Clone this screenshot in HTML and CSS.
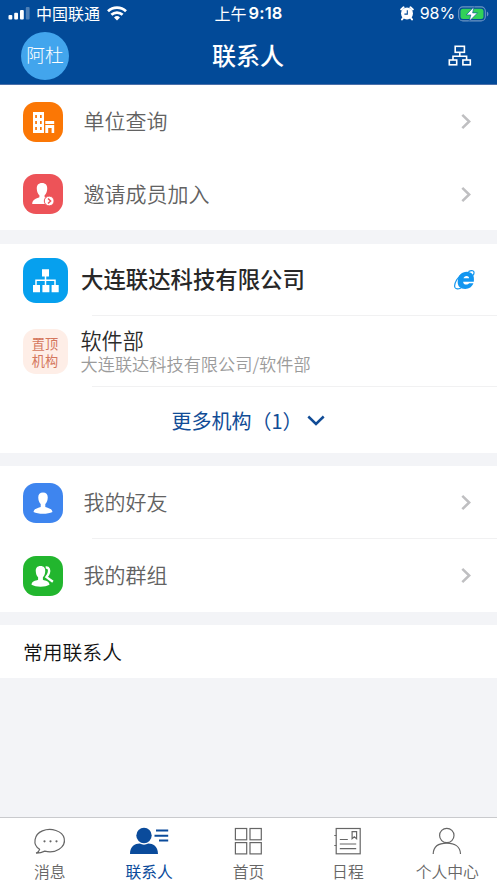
FILE: index.html
```html
<!DOCTYPE html>
<html lang="zh-CN">
<head>
<meta charset="utf-8">
<title>联系人</title>
<link rel="stylesheet" href="styles.css">
</head>
<body>
<div class="app">
  <header class="header">
    <div class="status">
      <div class="status-left">
        <svg class="signal" width="23" height="13" viewBox="0 0 23 13" fill="#fff"><rect x="0.5" y="8" width="3.8" height="4.5" rx="1"/><rect x="6.2" y="5.8" width="3.8" height="6.7" rx="1"/><rect x="12" y="3" width="3.8" height="9.5" rx="1"/><rect x="17.8" y="0" width="3.8" height="12.5" rx="1" opacity=".3"/></svg>
        <span class="carrier">中国联通</span>
        <svg class="wifi" width="20" height="15" viewBox="0 0 20 15" fill="none" stroke="#fff" stroke-width="2.7"><path d="M1 5.2a13 13 0 0 1 18 0"/><path d="M4.4 8.8a8.1 8.1 0 0 1 11.2 0"/><path d="M10 14.6l-3-3.1a4.4 4.4 0 0 1 6 0z" fill="#fff" stroke="none"/></svg>
      </div>
      <div class="time"><span>上午</span><b>9:18</b></div>
      <div class="status-right">
        <svg width="14" height="15" viewBox="0 0 14 15"><circle cx="7" cy="7.6" r="6" fill="#fff"/><path d="M1.2 3.4L3.6 1.300M12.800 3.400L10.400 1.300M3 12l-1 1.500M11 12l1 1.500" fill="none" stroke="#fff" stroke-width="2" stroke-linecap="round"/><path d="M7.300 4.300v3.800H4.400" fill="none" stroke="#024a98" stroke-width="1.100"/></svg>
        <span class="percent">98%</span>
        <svg width="31" height="16" viewBox="0 0 31 16"><rect x=".7" y=".9" width="26.6" height="14" rx="4.2" fill="none" stroke="#6d95c4" stroke-width="1.1"/><rect x="2.5" y="2.7" width="23" height="10.4" rx="2.5" fill="#31d158"/><path d="M28.9 5.4c2 .8 2 4.2 0 5z" fill="#6d95c4"/><path d="M16 .7L8.300 8.900h4.500l-1.600 6.400 8.300-8.400h-4.900z" fill="#fff" stroke="#024a98" stroke-width=".6"/></svg>
      </div>
    </div>
    <div class="nav">
      <div class="avatar">阿杜</div>
      <h1>联系人</h1>
      <svg class="nav-tree" width="24" height="22" viewBox="0 0 24 22" fill="none" stroke="#fff" stroke-width="1.6"><rect x="7.2" y="1.300" width="9.2" height="6"/><path d="M11.8 7.300v3.900M5 15v-3.800h13.600v3.800"/><rect x="1.3" y="15" width="7.4" height="4.8"/><rect x="14.9" y="15" width="7.4" height="4.8"/></svg>
    </div>
  </header>

  <main>
    <section class="group shortcuts">
      <div class="row">
        <span class="icon orange"><svg width="40" height="40" viewBox="0 0 40 40"><path fill="#fff" fill-rule="evenodd" d="M10 10h11v21H10zM12.2 13v3h1.7v-3zM17 13v3h1.7v-3zM12.2 19v3h1.7v-3zM17 19v3h1.7v-3zM12.2 25v3h1.7v-3zM17 25v3h1.7v-3zM22.3 19h8.9v3h-8.9zM22.3 23h8.9v8h-2.6v-5h-3.4v5h-2.9z"/></svg></span>
        <span class="label">单位查询</span>
        <svg class="arrow" width="10" height="17" viewBox="0 0 10 17"><path d="M1.3 1.8L8.2 8.5l-6.9 6.7"/></svg>
      </div>
      <div class="row">
        <span class="icon red"><svg width="40" height="40" viewBox="0 0 40 40"><path fill="#fff" d="M19 9c3.600 0 5.500 2.300 5.200 6-.1 3-1.200 5-2.600 6.300v2c3 1.300 6.300 1.800 6.800 6.800H9.200c0-4.900 4-5.300 7.200-6.800v-2c-1.400-1.300-2.500-3.300-2.600-6.300-.3-3.700 1.600-6 5.200-6z"/><circle cx="26.200" cy="27" r="4.900" fill="#fff" stroke="#ed5358" stroke-width="1"/><path d="M25 24.500l2.600 2.500-2.600 2.500" fill="none" stroke="#ed5358" stroke-width="1.500"/></svg></span>
        <span class="label">邀请成员加入</span>
        <svg class="arrow" width="10" height="17" viewBox="0 0 10 17"><path d="M1.3 1.8L8.2 8.5l-6.9 6.7"/></svg>
      </div>
    </section>

    <section class="group company">
      <div class="row org divided">
        <span class="icon large blue"><svg width="45" height="45" viewBox="0 0 45 45"><path d="M22.500 18v9.500M13 28v-5.700h19V28" fill="none" stroke="#fff" stroke-width="1.500"/><path d="M19 11.200h7v7.400h-7zM10 27h7v7.200h-7zM19.400 27h7v7.200h-7zM28.600 27h7.100v7.200h-7.100z" fill="#fff"/></svg></span>
        <span class="org-name">大连联达科技有限公司</span>
        <svg class="browser" width="21" height="20" viewBox="0 0 21 20"><path fill="#1296f0" fill-rule="evenodd" d="M19.800 11.700H9.200c-.1 1.900 1.100 2.800 3 2.800 1.300 0 2.300-.4 2.900-1.300h4.300c-1.300 3.500-4.200 5.700-8.200 5.700-4.900 0-7.800-2.900-7.500-7.500C4 5.600 7.700 1.800 12.800 1.800c5.200 0 8 3.500 7 9.900zM9.500 8.300h5.600c.1-1.500-.8-2.400-2.500-2.400s-2.700.9-3.100 2.400z"/><path d="M14.400 1.600c3.400-1.600 5.900-1 5.600 1.300-.1.900-.4 1.700-.9 2.500M9.200 3.200C4.400 5.600-.5 13.600.9 17.400c.8 2 3.300 1.900 6.100.6" fill="none" stroke="#1296f0" stroke-width="1.200"/></svg>
      </div>
      <div class="row dept divided">
        <span class="icon large pinned"><span>置顶</span><span>机构</span></span>
        <span class="dept-text"><span class="dept-name">软件部</span><span class="dept-path">大连联达科技有限公司/软件部</span></span>
      </div>
      <div class="more"><span>更多机构（1）</span><svg width="18" height="11" viewBox="0 0 18 11"><path d="M1.300 1.500L9 8.900l7.700-7.400" fill="none" stroke="#114c96" stroke-width="2.500"/></svg></div>
    </section>

    <section class="group">
      <div class="row divided">
        <span class="icon azure"><svg width="40" height="40" viewBox="0 0 40 40"><path fill="#fff" d="M20 9.500c3.400 0 5 2.200 4.700 5.500-.1 3-1.100 4.700-2.400 5.900v3c2.700 1.100 6.600 1.500 7.200 5-4.600 2.400-14.400 2.400-19 0 .6-3.500 4.500-3.900 7.200-5v-3c-1.300-1.200-2.300-2.900-2.400-5.900-.3-3.300 1.300-5.500 4.700-5.500z"/></svg></span>
        <span class="label">我的好友</span>
        <svg class="arrow" width="10" height="17" viewBox="0 0 10 17"><path d="M1.3 1.8L8.2 8.5l-6.9 6.7"/></svg>
      </div>
      <div class="row">
        <span class="icon green"><svg width="40" height="40" viewBox="0 0 40 40"><path fill="#fff" d="M17.500 10c3.400 0 5 2.200 4.700 5.500-.1 2.700-1.100 4.500-2.300 5.700v2.500c2.700 1.100 6.300 1.400 6.600 5-4.300 2.600-13.500 2.600-18 0 .3-3.600 4-3.900 6.600-5v-2.500c-1.300-1.200-2.200-3-2.300-5.700C12.500 12.200 14.100 10 17.500 10z"/><path d="M22.700 11.500c3.300-.4 3.900 2.300 3.100 5.400-.4 1.600-1.300 2.900-2.300 4.200l6.400 4.600" fill="none" stroke="#fff" stroke-width="2.400"/></svg></span>
        <span class="label">我的群组</span>
        <svg class="arrow" width="10" height="17" viewBox="0 0 10 17"><path d="M1.3 1.8L8.2 8.5l-6.9 6.7"/></svg>
      </div>
    </section>

    <section class="group frequent">常用联系人</section>
  </main>

  <nav class="tabs">
    <div class="tab"><svg width="44" height="30" viewBox="0 0 44 30"><path d="M11.600 23.300C4 18.600 6.200 8.200 14.400 4.900c8.500-3.500 20.200-.2 21.800 7.500 1.900 9-9 15.500-19.400 12.700-2.600 1.300-5.600 2.100-8.700 2 1.900-.9 3.100-2.100 3.500-3.800z"/><g class="solid"><circle cx="16.500" cy="15.300" r="1.100"/><circle cx="22.500" cy="15.300" r="1.100"/><circle cx="28.500" cy="15.300" r="1.100"/></g></svg><span>消息</span></div>
    <div class="tab active"><svg width="44" height="30" viewBox="0 0 44 30"><g class="solid"><circle cx="17" cy="9.500" r="7.700"/><path d="M3 28c0-7.600 5.200-10.400 9.600-10.400 2.800 1.500 6 1.500 8.800 0C25.800 17.600 31 20.400 31 28z"/></g><path class="lines" d="M29 4.500h12.200M27.500 9.800h13.700M32 14.600h9.200"/></svg><span>联系人</span></div>
    <div class="tab"><svg width="44" height="30" viewBox="0 0 44 30"><rect x="9.400" y="2.500" width="11.300" height="11.300"/><rect x="24" y="2.500" width="11.300" height="11.300"/><rect x="9.400" y="16.600" width="11.300" height="11.300"/><rect x="24" y="16.600" width="11.300" height="11.300"/></svg><span>首页</span></div>
    <div class="tab"><svg width="44" height="30" viewBox="0 0 44 30"><rect x="10.200" y="2.500" width="24" height="25.300"/><path d="M8.300 9.500h2M8.300 19.500h2M13.800 13.500h8M13.800 18h16.400M13.800 22.700h16.400M26.100 5.700h4.500v7l-2.300-2-2.200 2z"/></svg><span>日程</span></div>
    <div class="tab"><svg width="44" height="30" viewBox="0 0 44 30"><circle cx="21.800" cy="9.500" r="7.200"/><path d="M8.200 28c.2-7.600 6-10.900 13.600-10.900S35.300 20.400 35.500 28"/></svg><span>个人中心</span></div>
  </nav>
</div>
</body>
</html>
```
FILE: styles.css
```css
* { box-sizing: border-box; }
body {
  margin: 0;
  font-family: "Noto Sans CJK SC", sans-serif;
  background: #f3f4f7;
}
svg { display: block; flex: none; }
.app {
  width: 497px;
  height: 883px;
  display: flex;
  flex-direction: column;
  overflow: hidden;
}
main { flex: 1; display: flex; flex-direction: column; gap: 13px; }

.header { height: 85px; background: #024a98; color: #fff; border-bottom: 1px solid #4a6fa9; }
.status {
  height: 27px;
  display: grid;
  grid-template-columns: 1fr auto 1fr;
  align-items: center;
  padding: 0 8px;
  font-size: 16px;
  line-height: 27px;
}
.status-left, .status-right { display: flex; align-items: center; }
.carrier { margin-left: 5px; }
.wifi { margin-left: 7px; }
.time { display: flex; gap: 2px; }
.time b, .percent { font-family: Inter, sans-serif; }
.time b { font-weight: 600; font-size: 16.5px; letter-spacing: .2px; }
.status-right { justify-content: flex-end; }
.percent { margin: 0 3px 0 6px; font-size: 16px; letter-spacing: -.1px; }
.nav {
  height: 57px;
  display: grid;
  grid-template-columns: 1fr auto 1fr;
  align-items: center;
  padding: 0 25px 0 21px;
}
.avatar {
  width: 48px;
  height: 48px;
  border-radius: 50%;
  background: #42a5ed;
  font-size: 18.7px;
  font-weight: 300;
  line-height: 43px;
  text-align: center;
}
.nav h1 { margin: 0; padding: 0 0 2px 3px; font-size: 24px; font-weight: 500; line-height: 34px; }
.nav-tree { justify-self: end; }

.group { background: #fff; }
.row {
  height: 73px;
  display: flex;
  align-items: center;
  padding: 0 26px 0 22px;
  position: relative;
}
.shortcuts { margin-bottom: 1px; }
.shortcuts .row:last-child { height: 72px; }
.divided::after {
  content: "";
  position: absolute;
  left: 92px;
  right: 0;
  bottom: 0;
  height: 1px;
  background: #f1f1f2;
}
.icon { width: 40px; height: 40px; flex: none; border-radius: 13px; margin-left: .5px; }
.icon.large { width: 45px; height: 45px; }
.orange { background: #fb7705; }
.red { background: #ed5358; }
.blue { background: #06a0ee; }
.azure { background: #3e85ef; }
.green { background: #22b62e; }
.label {
  flex: 1;
  margin-left: 21px;
  padding-bottom: 3px;
  font-size: 21px;
  line-height: 30px;
  color: #626262;
  font-weight: 350;
}
.arrow { fill: none; stroke: #bfbfc1; stroke-width: 2.5; }

.org { height: 72px; padding-right: 22px; }
.org-name {
  flex: 1;
  margin-left: 13.5px;
  padding-bottom: 5px;
  font-size: 22.4px;
  font-weight: 500;
  line-height: 32px;
  color: #282828;
}
.dept { height: 71px; }
.pinned {
  display: flex;
  flex-direction: column;
  align-items: center;
  justify-content: center;
  background: #feeee7;
  color: #d4765c;
  font-size: 13.2px;
  line-height: 17px;
}
.dept-text { display: flex; flex-direction: column; margin-left: 13px; }
.dept-name { font-size: 21.1px; line-height: 23px; color: #2b2b2b; font-weight: 350; }
.dept-path { font-size: 17.2px; line-height: 23px; color: #9b9b9b; font-weight: 350; }
.more {
  height: 66px;
  display: flex;
  align-items: center;
  padding-left: 171.5px;
  gap: 4px;
  font-size: 20px;
  color: #114c96;
}
.frequent {
  height: 53px;
  padding-left: 23px;
  font-size: 19.8px;
  line-height: 53px;
  font-weight: 350;
  color: #111;
}

.tabs {
  height: 66px;
  display: grid;
  grid-template-columns: repeat(5, 1fr);
  background: #fff;
  border-top: 1px solid #c9cacd;
}
.tab {
  display: flex;
  flex-direction: column;
  align-items: center;
  padding-top: 8px;
  color: #666;
  font-size: 15.8px;
  font-weight: 350;
  line-height: 22px;
}
.tab span { margin-top: 5px; }
.tab svg { fill: none; stroke: currentColor; stroke-width: 1.2; }
.tab .solid { fill: currentColor; stroke: none; }
.tab .lines { stroke-width: 2; }
.active { color: #0a4b9b; font-weight: 400; }
```
